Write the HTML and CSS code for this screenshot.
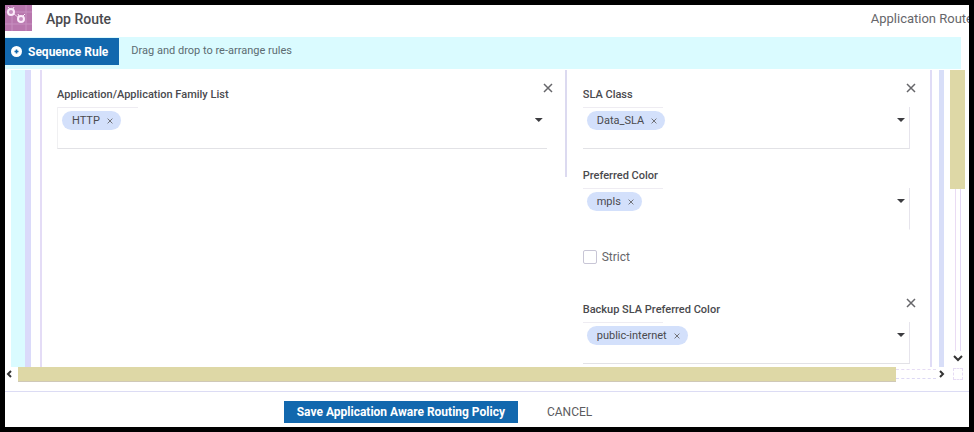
FILE: index.html
```html
<!DOCTYPE html>
<html lang="en">
<head>
  <meta charset="UTF-8" />
  <meta name="viewport" content="width=device-width, initial-scale=1"/>
  <title>App Route</title>
  <link rel="stylesheet" href="styles.css">
</head>
<body>
  <header class="header">
    <svg class="logo" viewBox="0 0 27 26" aria-hidden="true">
      <rect width="27" height="26" fill="#b876ad"/>
      <path d="M0 7h27M0 19h27M7 0v26M21 0v26" stroke="#c78fc0" stroke-width="1"/>
      <path d="M9 9l5 4" stroke="#e7c6e3" stroke-width="1"/>
      <g fill="#c78fc0" stroke="#fbeafa" stroke-width="2">
        <circle cx="6" cy="7" r="3"/>
        <circle cx="16" cy="14" r="3"/>
      </g>
      <path d="M3 2l2 2M9 2l-1 2M13 9l1 2M20 9l-2 2" stroke="#fbeafa" stroke-width="1"/>
    </svg>
    <h1>App Route</h1>
    <span class="header-type">Application Route</span>
  </header>

  <div class="toolbar">
    <button class="sequence-btn" type="button">
      <svg width="11" height="11" viewBox="0 0 11 11" aria-hidden="true">
        <circle cx="5.5" cy="5.5" r="5.5" fill="#fff"/>
        <path d="M5.5 3.5v4M3.5 5.5h4" stroke="#1268ae" stroke-width="1.6"/>
      </svg>
      Sequence Rule
    </button>
    <span class="hint">Drag and drop to re-arrange rules</span>
  </div>

  <main class="scroll-area">
    <div class="sequence">
      <div class="rule">
        <div class="rule-body">
          <section class="match">
            <div class="group">
              <button class="close" type="button" aria-label="Remove application list"><svg viewBox="0 0 10 10"><path d="M1 1l8 8M9 1l-8 8"/></svg></button>
              <div class="field">
                <h2>Application/Application Family List</h2>
                <div class="select edge-left">
                  <span class="chip">HTTP <button type="button" aria-label="Remove HTTP"><svg viewBox="0 0 10 10"><path d="M1 1l8 8M9 1l-8 8"/></svg></button></span>
                  <button class="arrow" type="button" aria-label="Open application list"></button>
                </div>
              </div>
            </div>
          </section>

          <section class="actions">
            <div class="group">
              <button class="close" type="button" aria-label="Remove SLA class"><svg viewBox="0 0 10 10"><path d="M1 1l8 8M9 1l-8 8"/></svg></button>
              <div class="field">
                <h2>SLA Class</h2>
                <div class="select edge-right">
                  <span class="chip">Data_SLA <button type="button" aria-label="Remove Data_SLA"><svg viewBox="0 0 10 10"><path d="M1 1l8 8M9 1l-8 8"/></svg></button></span>
                  <button class="arrow" type="button" aria-label="Open SLA class"></button>
                </div>
              </div>
              <div class="field">
                <h2>Preferred Color</h2>
                <div class="select edge-right no-line">
                  <span class="chip">mpls <button type="button" aria-label="Remove mpls"><svg viewBox="0 0 10 10"><path d="M1 1l8 8M9 1l-8 8"/></svg></button></span>
                  <button class="arrow" type="button" aria-label="Open preferred color"></button>
                </div>
              </div>
              <label class="strict"><input type="checkbox"> Strict</label>
            </div>
            <div class="group">
              <button class="close" type="button" aria-label="Remove backup color"><svg viewBox="0 0 10 10"><path d="M1 1l8 8M9 1l-8 8"/></svg></button>
              <div class="field">
                <h2>Backup SLA Preferred Color</h2>
                <div class="select edge-right">
                  <span class="chip">public-internet <button type="button" aria-label="Remove public-internet"><svg viewBox="0 0 10 10"><path d="M1 1l8 8M9 1l-8 8"/></svg></button></span>
                  <button class="arrow" type="button" aria-label="Open backup color"></button>
                </div>
              </div>
            </div>
          </section>
        </div>
      </div>
    </div>
    <div class="vbar">
      <div class="vthumb"></div>
      <div class="vtrack"></div>
      <svg class="chevron" viewBox="0 0 10 10"><path d="M1 3l4 4 4-4"/></svg>
    </div>
  </main>

  <div class="hbar">
    <svg class="chevron" viewBox="0 0 10 10"><path d="M6 2L3 5l3 3"/></svg>
    <div class="hthumb"></div>
    <div class="htrack"></div>
    <svg class="chevron" viewBox="0 0 10 10"><path d="M4 2l3 3-3 3"/></svg>
    <div class="corner"></div>
  </div>

  <footer class="footer">
    <button class="save" type="button">Save Application Aware Routing Policy</button>
    <button class="cancel" type="button">CANCEL</button>
  </footer>
</body>
</html>
```

FILE: styles.css
```css
* {
  box-sizing: border-box;
}

body {
  margin: 0;
  height: 100vh;
  display: flex;
  flex-direction: column;
  border: 5px solid #000;
  overflow: hidden;
  background-color: #fff;
  color: #4a4a4e;
  font-family: Roboto, "Liberation Sans", sans-serif;
  font-size: 11px;
}

button {
  font-family: inherit;
  border: none;
  padding: 0;
  background: none;
  color: inherit;
  cursor: pointer;
}

h1, h2 {
  margin: 0;
  font-weight: 500;
}

/* header */
.header {
  display: flex;
  align-items: flex-start;
  flex: none;
  height: 32px;
  line-height: 28px;
  white-space: nowrap;
}

.logo {
  width: 27px;
  height: 26px;
  margin-right: 14px;
}

.header h1 {
  font-size: 14px;
}

.header-type {
  margin-left: auto;
  margin-right: -4px;
  font-size: 13px;
  color: #66666a;
}

.toolbar {
  display: flex;
  align-items: flex-start;
  flex: none;
  height: 32px;
  margin-right: 8px;
  line-height: 27px;
  background-color: #dafbff;
}

.sequence-btn {
  display: flex;
  align-items: center;
  gap: 6px;
  height: 27px;
  margin-top: 1px;
  padding: 0 11px 0 6px;
  background-color: #1268ae;
  color: #fff;
  font-size: 12px;
  font-weight: 700;
}

.hint {
  margin-left: 12px;
  color: #5c6c72;
}

/* scrolling rule list */
.scroll-area {
  display: flex;
  flex: 1;
  min-height: 0;
  margin-top: 1px;
}

.sequence {
  flex: 1;
  display: flex;
  min-width: 0;
  margin-left: 6px;
  border-left: 14px solid #dafbff;
  overflow: hidden;
}

.rule {
  flex: 1;
  padding: 0 7px 0 9px;
  border-left: 6px solid #dadafa;
  border-right: 5px solid #d8def8;
}

.rule-body {
  display: grid;
  grid-template-columns: 13fr 9fr;
  align-items: start;
  border-left: 2px solid #e4dcf6;
  border-right: 2px solid #e0dcf6;
}

.match {
  padding: 16px 18px 28px 15px;
  border-right: 2px solid #dcdaf0;
}

.actions {
  padding: 16px 20px 16px 16px;
}

.group {
  position: relative;
  display: flex;
  flex-direction: column;
  gap: 18px;
}

.group + .group {
  margin-top: 35px;
}

.close {
  position: absolute;
  top: -3px;
  right: -6px;
  width: 10px;
  height: 10px;
}

.close svg,
.chip svg {
  display: block;
  width: 100%;
  fill: none;
  stroke: #66666a;
  stroke-width: 1.5;
}

.field h2 {
  margin-bottom: 4px;
  font-size: 11px;
  line-height: 17px;
}

.select {
  position: relative;
  display: flex;
  align-items: flex-start;
  justify-content: space-between;
  height: 42px;
  padding: 4px;
  border-bottom: 1px solid #e2e2e6;
}

.select::before {
  content: "";
  position: absolute;
  top: 0;
  left: 0;
  width: 80px;
  border-top: 1px solid #eeecf2;
}

.edge-left {
  border-left: 1px solid #f0f0f2;
}

.edge-right {
  border-right: 1px solid #e6e4ec;
}

.no-line {
  border-bottom-color: transparent;
}

.chip {
  display: flex;
  align-items: center;
  gap: 7px;
  height: 19px;
  padding: 0 8px 0 10px;
  border-radius: 10px;
  background-color: #d3e0fb;
  font-size: 11px;
}

.chip button {
  width: 6px;
  height: 6px;
}

.arrow {
  width: 8px;
  height: 4px;
  margin-top: 7px;
  background-color: #3c3c40;
  clip-path: polygon(0 0, 100% 0, 50% 100%);
}

.strict {
  display: flex;
  align-items: center;
  gap: 5px;
  font-size: 12px;
  line-height: 18px;
  color: #66666a;
}

.strict input {
  appearance: none;
  width: 14px;
  height: 14px;
  margin: 0;
  border: 1px solid #c8c6d6;
  border-radius: 2px;
}

/* scrollbars */
.vbar {
  display: flex;
  flex-direction: column;
  align-items: center;
  width: 15px;
  margin: 0 4px 0 6px;
}

.vthumb {
  width: 100%;
  height: 40%;
  background-color: #ded8a6;
}

.vtrack {
  flex: 1;
  width: 6px;
  border-left: 1px solid #eadcf4;
  border-right: 1px solid #e2d6f4;
}

.chevron {
  width: 10px;
  height: 10px;
  margin: 2px 0 4px;
  fill: none;
  stroke: #333;
  stroke-width: 2;
}

.hbar {
  display: flex;
  flex: none;
  height: 15px;
}

.hthumb {
  flex: 1;
  margin-left: 3px;
  background-color: #ded8a6;
  border-bottom: 1px solid #cfc8b8;
}

.htrack {
  width: 40px;
  height: 10px;
  margin: 2px 0 0;
  border-top: 1px dashed #e6dcf4;
  border-bottom: 1px dashed #dcd8f4;
}

.corner {
  width: 10px;
  height: 12px;
  margin: 1px 6px 0 7px;
  border: 1px dashed #e6dcf4;
}

.footer {
  display: flex;
  align-items: center;
  justify-content: center;
  flex: none;
  gap: 29px;
  height: 36px;
  margin-top: 9px;
  padding: 4px 98px 0 0;
  border-top: 1px solid #dcdcf4;
}

.save {
  height: 22px;
  padding: 0 13px;
  background-color: #1268ae;
  color: #fff;
  font-size: 12px;
  font-weight: 700;
}

.cancel {
  font-size: 12px;
  color: #5c5c60;
}
```
